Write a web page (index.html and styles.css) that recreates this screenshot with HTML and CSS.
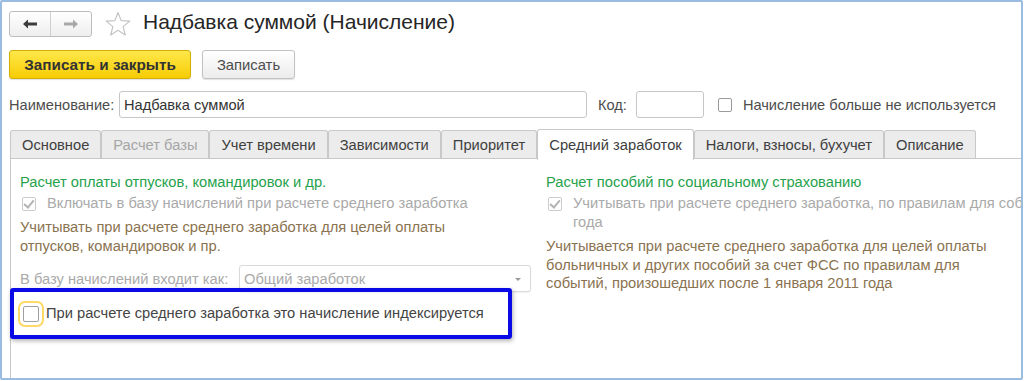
FILE: index.html
```html
<!DOCTYPE html>
<html lang="ru">
<head>
  <meta charset="UTF-8">
  <title>Надбавка суммой (Начисление)</title>
  <link rel="stylesheet" href="styles.css">
</head>
<body>

<div class="window">
  <div class="titlebar">
    <div class="nav">
      <span class="nav-btn">
        <svg width="16" height="12" viewBox="0 0 16 12"><path d="M1 6 L6 1.5 L6 4.5 L15 4.5 L15 7.5 L6 7.5 L6 10.5 Z" fill="#3c3c3c"/></svg>
      </span>
      <span class="nav-btn">
        <svg width="16" height="12" viewBox="0 0 16 12"><path d="M15 6 L10 1.5 L10 4.5 L1 4.5 L1 7.5 L10 7.5 L10 10.5 Z" fill="#a8a8a8"/></svg>
      </span>
    </div>
    <svg class="star" width="26" height="26" viewBox="0 0 26 26"><path d="M13 1.5 L16.2 9.6 L24.8 10.1 L18.1 15.6 L20.3 24 L13 19.3 L5.7 24 L7.9 15.6 L1.2 10.1 L9.8 9.6 Z" fill="none" stroke="#c4c4c4" stroke-width="1.2" stroke-linejoin="round"/></svg>
    <h1>Надбавка суммой (Начисление)</h1>
  </div>

  <div class="commands">
    <button class="btn btn-default">Записать и закрыть</button>
    <button class="btn">Записать</button>
  </div>

  <div class="fields">
    <label class="lbl name-lbl">Наименование:</label>
    <div class="input name-input">Надбавка суммой</div>
    <label class="lbl code-lbl">Код:</label>
    <div class="input code-input"></div>
    <span class="check"></span>
    <span class="lbl">Начисление больше не используется</span>
  </div>

  <div class="tabs">
    <div class="tab">Основное</div>
    <div class="tab disabled">Расчет базы</div>
    <div class="tab">Учет времени</div>
    <div class="tab">Зависимости</div>
    <div class="tab">Приоритет</div>
    <div class="tab active">Средний заработок</div>
    <div class="tab">Налоги, взносы, бухучет</div>
    <div class="tab">Описание</div>
  </div>

  <div class="panel">
    <div class="col left-col">
      <div class="group-title">Расчет оплаты отпусков, командировок и др.</div>
      <div class="check-row">
        <span class="check checked"></span>
        <span class="muted">Включать в базу начислений при расчете среднего заработка</span>
      </div>
      <div class="hint left-hint">Учитывать при расчете среднего заработка для целей оплаты отпусков, командировок и пр.</div>
      <div class="select-row">
        <span class="muted">В базу начислений входит как:</span>
        <div class="input select">Общий заработок<span class="arrow"></span></div>
      </div>
      <div class="check-row index-row">
        <span class="check focused"></span>
        <span>При расчете среднего заработка это начисление индексируется</span>
      </div>
      <div class="highlight"></div>
    </div>

    <div class="col right-col">
      <div class="group-title">Расчет пособий по социальному страхованию</div>
      <div class="check-row top">
        <span class="check checked"></span>
        <span class="muted">Учитывать при расчете среднего заработка, по правилам для событий, произошедших после 1 января 2011<br>года</span>
      </div>
      <div class="hint right-hint">Учитывается при расчете среднего заработка для целей оплаты больничных и других пособий за счет ФСС по правилам для событий, произошедших после 1 января 2011 года</div>
    </div>
  </div>
</div>

</body>
</html>
```

FILE: styles.css
```css
body {
  margin: 0;
  font-family: 'Liberation Sans', Arial, sans-serif;
  font-size: 14.7px;
  color: #4d4d4d;
  background: #ffffff;
}

.window {
  width: 1023px;
  height: 380px;
  box-sizing: border-box;
  border: 2px solid #99bce0;
  border-radius: 2px;
  padding: 9px 0 0 7px;
  overflow: hidden;
  background: white;
}

.titlebar {
  display: flex;
  align-items: center;
  height: 26px;
}

.nav {
  display: flex;
  width: 83px;
  height: 26px;
  box-sizing: border-box;
  border: 1px solid #bdbdbd;
  border-radius: 3px;
  background: linear-gradient(#ffffff, #eeeeee);
}

.nav-btn {
  flex: 1;
  display: flex;
  align-items: center;
  justify-content: center;
}

.nav-btn + .nav-btn {
  border-left: 1px solid #cfcfcf;
}

.star {
  margin-left: 13px;
}

h1 {
  margin: 0 0 0 12px;
  font-size: 21px;
  font-weight: normal;
  color: #262626;
  position: relative;
  top: -2px;
  white-space: nowrap;
}

.commands {
  display: flex;
  gap: 11px;
  margin-top: 13px;
}

.btn {
  height: 29px;
  padding: 0;
  border: 1px solid #c2c2c2;
  border-radius: 3px;
  background: linear-gradient(#ffffff, #ececec);
  font-family: 'Liberation Sans', Arial, sans-serif;
  font-size: 14.8px;
  color: #4d4d4d;
  box-shadow: 0 1px 1px rgba(0,0,0,0.12);
}

.btn-default {
  width: 182px;
  background: linear-gradient(#ffe84a, #f7cc05);
  border-color: #d4ae00;
  font-weight: bold;
  font-size: 15.3px;
  color: #333;
}

.btn:not(.btn-default) {
  width: 93px;
}

.fields {
  display: flex;
  align-items: center;
  margin-top: 12px;
  height: 27px;
  font-size: 14.6px;
}

.lbl {
  white-space: nowrap;
}

.name-lbl {
  width: 110px;
  flex-shrink: 0;
}

.input {
  height: 27px;
  box-sizing: border-box;
  border: 1px solid #c6c6c6;
  border-radius: 3px;
  padding: 0 4px;
  display: flex;
  align-items: center;
  background: white;
  color: #333;
  white-space: nowrap;
  flex-shrink: 0;
}

.name-input {
  width: 468px;
}

.code-lbl {
  margin-left: 11px;
}

.code-input {
  width: 68px;
  margin-left: 9px;
  margin-right: 14px;
}

.check {
  width: 14px;
  height: 14px;
  box-sizing: border-box;
  border: 1px solid #9a9a9a;
  border-radius: 2px;
  background: white;
  margin-right: 11px;
  flex-shrink: 0;
  position: relative;
}

.check.checked {
  border-color: #cccccc;
}

.check.checked::after {
  content: "";
  position: absolute;
  left: 3px;
  top: 0;
  width: 4px;
  height: 8px;
  border: solid #b4b4b4;
  border-width: 0 2px 2px 0;
  transform: rotate(40deg);
}

.check.focused {
  width: 16px;
  height: 16px;
  border-color: #a0a0a0;
  outline: 2px solid #ffd966;
  outline-offset: 3px;
}

.tabs {
  display: flex;
  margin-top: 12px;
  margin-left: 1px;
  height: 28px;
  align-items: flex-end;
}

.tab {
  height: 28px;
  box-sizing: border-box;
  padding: 0 11px;
  display: flex;
  align-items: center;
  background: #ececec;
  border: 1px solid #c8c8c8;
  border-bottom: none;
  border-radius: 3px 3px 0 0;
  color: #404040;
  white-space: nowrap;
}

.tab.disabled {
  color: #a6a6a6;
}

.tab.active {
  background: white;
  height: 31px;
  margin-bottom: -2px;
  position: relative;
  z-index: 1;
}

.panel {
  margin-left: 1px;
  height: 230px;
  border-left: 1px solid #c8c8c8;
  border-top: 1px solid #c8c8c8;
  display: flex;
  padding: 15px 0 0 9px;
}

.col {
  display: flex;
  flex-direction: column;
  flex-shrink: 0;
}

.left-col {
  width: 526px;
  position: relative;
}

.right-col {
  width: 600px;
}

.group-title {
  color: #26a24c;
  line-height: 17px;
  white-space: nowrap;
}

.check-row {
  display: flex;
  align-items: center;
  margin-top: 3px;
  line-height: 19px;
  white-space: nowrap;
}

.check-row.top {
  align-items: flex-start;
}

.check-row.top .check {
  margin-top: 3px;
}

.check-row .check {
  margin-left: 2px;
  margin-right: 11px;
}

.muted {
  color: #aaaaaa;
}

.hint {
  color: #8a7350;
  line-height: 19px;
}

.left-hint {
  width: 460px;
  margin-top: 5px;
}

.right-hint {
  width: 460px;
  margin-top: 5px;
  line-height: 18.5px;
}

.select-row {
  display: flex;
  align-items: center;
  margin-top: 9px;
  white-space: nowrap;
}

.select {
  width: 292px;
  margin-left: auto;
  margin-right: 15px;
  color: #aaaaaa;
  border-color: #dadada;
  position: relative;
  box-shadow: 0 1px 2px rgba(0,0,0,0.06);
}

.arrow {
  position: absolute;
  right: 9px;
  top: 12px;
  border: 3px solid transparent;
  border-top: 3px solid #9a9a9a;
}

.index-row {
  margin-top: 12px;
  color: #444;
}

.index-row .check {
  margin-left: 3px;
  margin-right: 7px;
}

.highlight {
  position: absolute;
  left: -10px;
  top: 114px;
  width: 502px;
  height: 51px;
  box-sizing: border-box;
  border: 4px solid #0a0ae6;
  border-radius: 3px;
  box-shadow: 1px 2px 4px rgba(0,0,0,0.3);
}
```
